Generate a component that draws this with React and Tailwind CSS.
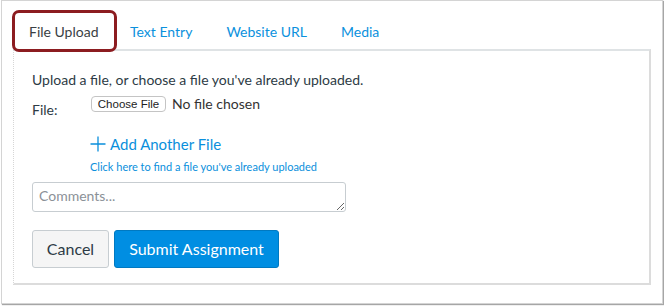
import React from "react";

const tabs = ["Text Entry", "Website URL", "Media"];

function PlusIcon() {
  return (
    <svg width="16" height="16" viewBox="0 0 16 16" className="shrink-0">
      <path d="M8 0.5v15M0.5 8h15" stroke="#0a8fdc" strokeWidth="1.3" fill="none" />
    </svg>
  );
}

export default function App() {
  return (
    <div className="w-[664px] h-[306px] bg-white font-['Lato',sans-serif] text-[#2d3b45]">
      <div className="ml-px w-[662px] h-[304px] border border-[#d4d4d4] shadow-[1px_1px_1px_rgba(0,0,0,0.35)] bg-white">
        {/* tabs */}
        <div className="flex items-center pl-[10px] pt-[9px]">
          <div className="relative z-10 w-[105px] h-[42px] -mb-[3px] border-[3px] border-[#8c1c20] rounded-[7px] bg-white pl-[14px] flex items-center text-[14px] text-[#3a3f44]">
            File Upload
          </div>
          <div className="flex">
            {tabs.map((t) => (
              <span key={t} className="px-[17px] first:pl-[13px] text-[14px] text-[#0b91dd] -mb-[3px]">
                {t}
              </span>
            ))}
          </div>
        </div>

        {/* panel */}
        <div className="ml-[11px] w-[638px] h-[236px] border-t-2 border-t-[#dfe3e5] border-l border-l-[#d6d6d6] [border-left-style:dotted] border-r-2 border-r-[#dcdcdc] border-b-2 border-b-[#dcdcdc] pl-[18px] pt-[19px]">
          <div className="text-[14px] leading-[20px]">
            Upload a file, or choose a file you've already uploaded.
          </div>
          <div className="flex mt-[3px]">
            <div className="w-[59px] pt-[7px] text-[14px] leading-[20px]">File:</div>
            <div className="flex flex-col">
              <div className="flex items-center">
                <span className="h-[16px] w-[75px] justify-center border border-[#c4c4c4] rounded-[4px] bg-white font-['Liberation_Sans',sans-serif] text-[11.5px] leading-[14px] text-[#222] flex items-center">
                  Choose File
                </span>
                <span className="ml-[6px] text-[14px] text-[#333]">No file chosen</span>
              </div>
              <div className="flex items-center gap-[4px] mt-[21px] -ml-px text-[15px] leading-[18px] text-[#0a8fdc]">
                <PlusIcon />
                <span>Add Another File</span>
              </div>
              <div className="-ml-px mt-[7px] text-[11px] leading-[14px] text-[#0a8fdc]">
                Click here to find a file you've already uploaded
              </div>
            </div>
          </div>
          <textarea
            placeholder="Comments..."
            className="block mt-[8px] w-[314px] h-[30px] border border-[#c7cdd1] rounded-[3px] px-[6px] py-[4px] text-[14px] leading-[18px] placeholder:text-[#8b9197] outline-none"
          />
          <div className="flex gap-[5px] mt-[18px]">
            <button className="w-[77px] h-[38px] bg-[#f5f5f5] border border-[#c7cdd1] rounded-[3px] text-[16px] text-[#2d3b45]">
              Cancel
            </button>
            <button className="w-[165px] h-[38px] bg-[#008ee2] border border-[#0079c1] rounded-[3px] text-[16px] text-white">
              Submit Assignment
            </button>
          </div>
        </div>
      </div>
    </div>
  );
}
